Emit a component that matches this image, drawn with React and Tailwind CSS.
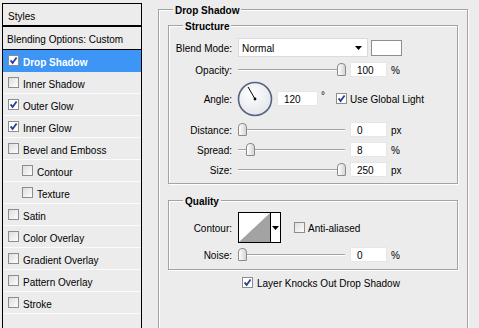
import React from 'react';

const effects = [
  { name: 'Drop Shadow', checked: true, selected: true },
  { name: 'Inner Shadow' },
  { name: 'Outer Glow', checked: true },
  { name: 'Inner Glow', checked: true },
  { name: 'Bevel and Emboss' },
  { name: 'Contour', indent: true },
  { name: 'Texture', indent: true },
  { name: 'Satin' },
  { name: 'Color Overlay' },
  { name: 'Gradient Overlay' },
  { name: 'Pattern Overlay' },
  { name: 'Stroke' },
];

function CheckBox({ checked }) {
  return (
    <svg width="11" height="11" viewBox="0 0 11 11" className="shrink-0">
      <defs>
        <linearGradient id="cbg" x1="0" y1="0" x2="1" y2="1">
          <stop offset="0" stopColor="#dcdcdc" />
          <stop offset="1" stopColor="#ffffff" />
        </linearGradient>
      </defs>
      <rect x="0.5" y="0.5" width="10" height="10" fill={checked ? '#ffffff' : 'url(#cbg)'} stroke="#8d8d8d" />
      {checked && (
        <path d="M2.6 5.4 L4.6 8 L8.6 2.4" fill="none" stroke="#2a3f94" strokeWidth="1.8" />
      )}
    </svg>
  );
}

function Arrow() {
  return (
    <svg width="7" height="4" viewBox="0 0 7 4">
      <path d="M0 0 H7 L3.5 4 Z" fill="#000" />
    </svg>
  );
}

function Slider({ value, max }) {
  const left = Math.round((value / max) * 99);
  return (
    <div className="relative w-[107px] h-[15px]">
      <div className="absolute left-0 right-0 top-[7px] h-[2px] border-t border-[#a2a2a2] border-b border-b-white" />
      <div
        className="absolute top-[1px] w-[9px] h-[13px] rounded-t-[4px] rounded-b-[1px] border border-[#8a8a8a] bg-gradient-to-r from-white to-[#d4d4d4]"
        style={{ left }}
      />
    </div>
  );
}

function NumBox({ value, w = 'w-[37px]' }) {
  return (
    <div className={`${w} h-[15px] bg-white border border-[#e6e6e6] pl-[6px] leading-[15px]`}>{value}</div>
  );
}

function Label({ children }) {
  return <div className="w-[64px] text-right pr-[1px] pt-[1px] shrink-0">{children}</div>;
}

function SliderRow({ label, value, max, unit, className }) {
  return (
    <div className={`flex items-center h-[15px] ${className}`}>
      <Label>{label}</Label>
      <div className="ml-[5px]">
        <Slider value={value} max={max} />
      </div>
      <div className="ml-[5px]">
        <NumBox value={value} />
      </div>
      <div className="ml-[4px] pt-[1px]">{unit}</div>
    </div>
  );
}

function Group({ title, className, children }) {
  return (
    <div className={`relative border border-[#a3a3a3] shadow-[inset_1px_1px_0_#fff,1px_1px_0_#fff] ${className}`}>
      <div className="absolute -top-[6px] left-[14px] px-[2px] bg-[#ececec] font-bold leading-[13px]">{title}</div>
      {children}
    </div>
  );
}

function Dial() {
  return (
    <svg width="36" height="36" viewBox="0 0 36 36" className="shrink-0">
      <defs>
        <radialGradient id="dialg" cx="0.4" cy="0.35" r="0.7">
          <stop offset="0" stopColor="#ffffff" />
          <stop offset="1" stopColor="#e2e4ea" />
        </radialGradient>
      </defs>
      <circle cx="18" cy="18" r="16.5" fill="url(#dialg)" stroke="#56627f" strokeWidth="1.6" />
      <line x1="18" y1="18" x2="11" y2="5.9" stroke="#000" strokeWidth="1" />
      <circle cx="18" cy="18" r="1.4" fill="#000" />
    </svg>
  );
}

export default function App() {
  return (
    <div className="w-[479px] h-[328px] overflow-hidden bg-[#ececec] flex items-start text-black text-[10px] font-['Liberation_Sans',Arial,sans-serif]">
      {/* styles list */}
      <div className="ml-[2px] mt-[3px] w-[140px] h-[330px] border border-black shrink-0">
        <div className="h-[23px] flex items-center pl-[5px] pt-[3px] border-b-2 border-black">Styles</div>
        <div className="h-[23px] flex items-center pl-[4px] pt-[2px] border-b border-black">Blending Options: Custom</div>
        {effects.map((fx) => (
          <div
            key={fx.name}
            className={`h-[22px] flex items-center gap-[4px] border-b ${
              fx.selected ? 'bg-[#3d96f6] text-white font-bold border-[#3d96f6]' : 'border-[#fbfbfb]'
            } ${fx.indent ? 'pl-[19px]' : 'pl-[5px]'}`}
          >
            <CheckBox checked={fx.checked} />
            <span className="pt-[3px]">{fx.name}</span>
          </div>
        ))}
      </div>

      {/* drop shadow panel */}
      <Group title="Drop Shadow" className="ml-[16px] mt-[9px] w-[310px] h-[330px] shrink-0">
        <Group title="Structure" className="mt-[15px] ml-[9px] w-[290px] pb-[6px]">
          <div className="flex items-center h-[19px] mt-[12px]">
            <Label>Blend Mode:</Label>
            <div className="ml-[5px] w-[130px] h-[19px] bg-white border border-[#dadada] flex items-center justify-between pl-[3px] pr-[5px]">
              <span className="pt-[1px]">Normal</span>
              <Arrow />
            </div>
            <div className="ml-[3px] w-[31px] h-[16px] bg-white border border-[#8e8e8e]" />
          </div>
          <SliderRow label="Opacity:" value={100} max={100} unit="%" className="mt-[5px]" />
          <div className="flex items-center h-[35px] mt-[4px]">
            <Label>Angle:</Label>
            <div className="ml-[4px]">
              <Dial />
            </div>
            <div className="ml-[4px]">
              <NumBox value={120} w="w-[41px]" />
            </div>
            <div className="ml-[3px] self-start mt-[10px] leading-none">°</div>
            <div className="ml-[11px]">
              <CheckBox checked />
            </div>
            <div className="ml-[3px] pt-[1px]">Use Global Light</div>
          </div>
          <SliderRow label="Distance:" value={0} max={30000} unit="px" className="mt-[6px]" />
          <SliderRow label="Spread:" value={8} max={100} unit="%" className="mt-[5px]" />
          <SliderRow label="Size:" value={250} max={250} unit="px" className="mt-[5px]" />
        </Group>

        <Group title="Quality" className="mt-[16px] ml-[9px] w-[290px] pb-[7px]">
          <div className="flex items-center h-[31px] mt-[11px]">
            <Label>Contour:</Label>
            <div className="ml-[5px] w-[43px] h-[31px] border border-black flex bg-white">
              <svg width="31" height="29" viewBox="0 0 31 29" className="shrink-0">
                <polygon points="0,29 31,0 31,29" fill="#a3a3a3" />
              </svg>
              <div className="flex-1 border-l border-black flex items-center justify-center">
                <Arrow />
              </div>
            </div>
            <div className="ml-[13px]">
              <CheckBox />
            </div>
            <div className="ml-[3px] pt-[1px]">Anti-aliased</div>
          </div>
          <SliderRow label="Noise:" value={0} max={100} unit="%" className="mt-[4px]" />
        </Group>

        <div className="flex items-center h-[13px] mt-[6px] ml-[83px]">
          <CheckBox checked />
          <div className="ml-[4px] pt-[1px]">Layer Knocks Out Drop Shadow</div>
        </div>
      </Group>
    </div>
  );
}
